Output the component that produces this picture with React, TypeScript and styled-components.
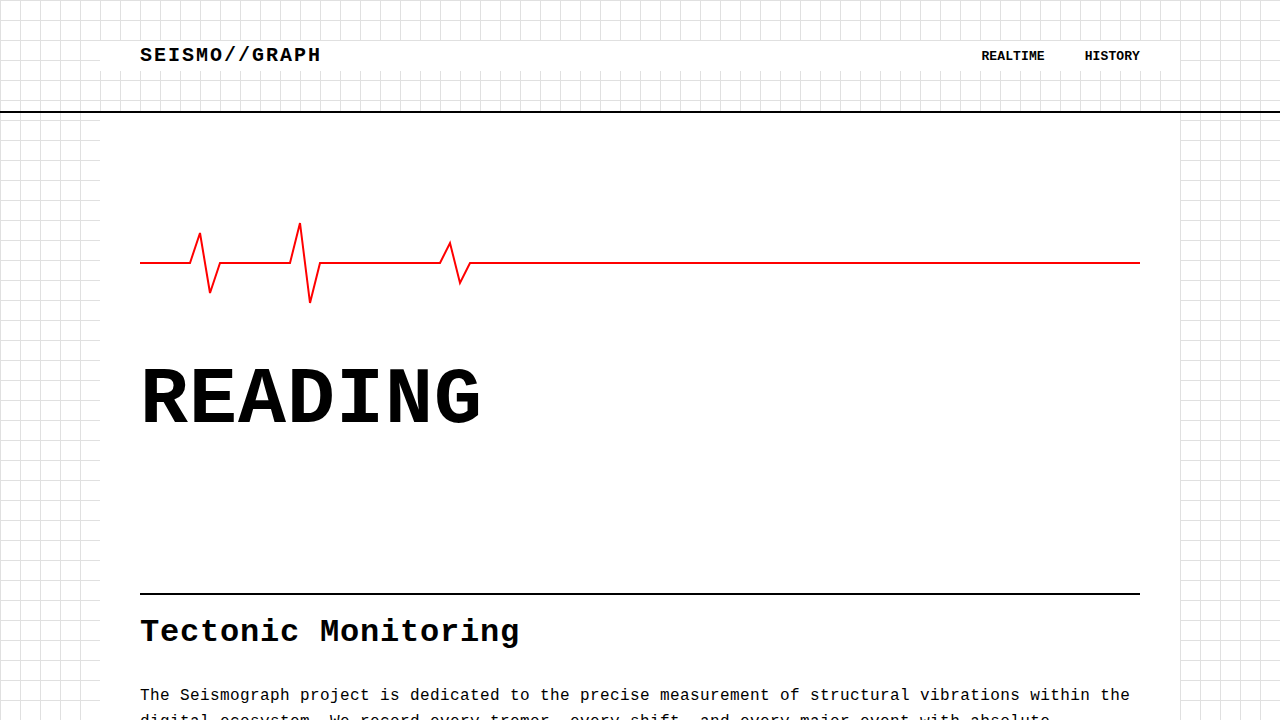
import React from 'react';
import styled, { createGlobalStyle } from 'styled-components';

const GlobalStyle = createGlobalStyle`
  html, body {
    margin: 0;
    padding: 0;
  }
  body {
    font-family: "Liberation Mono", "DejaVu Sans Mono", monospace;
    color: #000;
    background-color: #fff;
    background-image:
      linear-gradient(#e0e0e0 1px, transparent 1px),
      linear-gradient(90deg, #e0e0e0 1px, transparent 1px);
    background-size: 20px 20px;
  }
  * {
    box-sizing: border-box;
  }
`;

const wave: [number, number][] = [
  [0, 50], [50, 50], [60, 20], [70, 80], [80, 50],
  [150, 50], [160, 10], [170, 90], [180, 50],
  [300, 50], [310, 30], [320, 70], [330, 50],
  [1000, 50],
];

const App = () => (
  <>
    <GlobalStyle />
    <Header>
      <NavBar>
        <Logo>SEISMO//GRAPH</Logo>
        <Links>
          <NavLink href="#">REALTIME</NavLink>
          <NavLink href="#">HISTORY</NavLink>
        </Links>
      </NavBar>
    </Header>
    <Main>
      <Hero>
        <Wave viewBox="0 0 1000 100" preserveAspectRatio="none">
          <polyline
            points={wave.map(([x, y]) => `${x},${y}`).join(' ')}
            fill="none"
            stroke="#ff0000"
            strokeWidth="2"
          />
        </Wave>
        <Title>READING</Title>
      </Hero>
      <Section>
        <SectionTitle>Tectonic Monitoring</SectionTitle>
        <Body>
          The Seismograph project is dedicated to the precise measurement of structural
          vibrations within the digital ecosystem. We record every tremor, every shift, and
          every major event with absolute precision.
        </Body>
      </Section>
    </Main>
  </>
);

const Header = styled.header`
  padding: 41px 0 40px;
  border-bottom: 2px solid #000;
`;

const NavBar = styled.nav`
  max-width: 1080px;
  height: 30px;
  margin: 0 auto;
  padding: 0 40px;
  background: #fff;
  display: flex;
  align-items: center;
  justify-content: space-between;
`;

const Logo = styled.div`
  font-size: 20px;
  font-weight: 700;
  letter-spacing: 2px;
  line-height: 1;
`;

const Links = styled.div`
  display: flex;
  gap: 40px;
`;

const NavLink = styled.a`
  font-size: 13px;
  font-weight: 700;
  letter-spacing: 0.1px;
  color: #000;
  text-decoration: none;
  line-height: 1;
`;

const Main = styled.main`
  max-width: 1080px;
  margin: 0 auto;
  padding: 0 40px 80px;
  background: #fff;
`;

const Hero = styled.section`
  padding: 100px 0 152px;
`;

const Wave = styled.svg`
  display: block;
  width: 100%;
  height: 100px;
  overflow: visible;
`;

const Title = styled.h1`
  margin: 48px 0 0;
  font-size: 80px;
  font-weight: 700;
  letter-spacing: 1px;
  line-height: 1;
`;

const Section = styled.section`
  border-top: 2px solid #000;
  padding-top: 19px;
`;

const SectionTitle = styled.h2`
  margin: 0 0 32px;
  font-size: 32px;
  font-weight: 700;
  letter-spacing: 0.8px;
  line-height: 1.2;
`;

const Body = styled.p`
  margin: 0;
  font-size: 16px;
  letter-spacing: 0.4px;
  line-height: 1.6;
`;

export default App;
